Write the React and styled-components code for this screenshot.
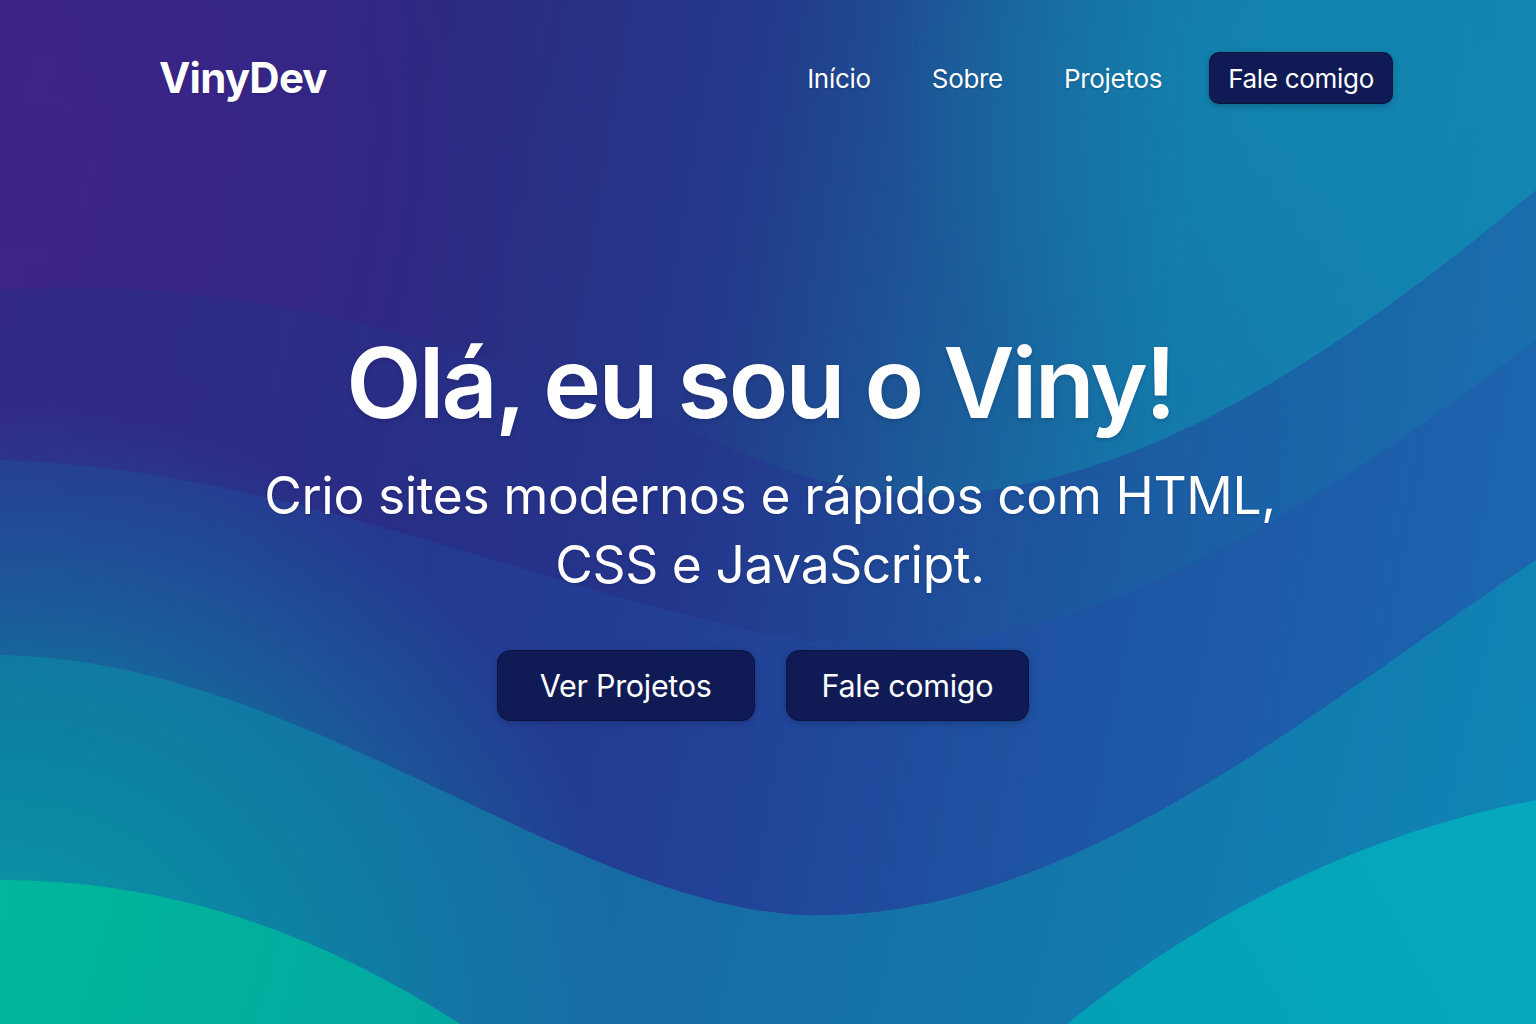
import React from "react";
import styled, { createGlobalStyle } from "styled-components";

const GlobalStyle = createGlobalStyle`
  html, body { margin: 0; padding: 0; }
  body {
    font-family: Inter, "Noto Sans", "Liberation Sans", sans-serif;
    color: #fff;
    background: #25308a;
  }
  * { box-sizing: border-box; }
`;

const Page = styled.div`
  position: relative;
  width: 100%;
  height: 1024px;
  overflow: hidden;
  background: #25308a;
`;

const Backdrop = styled.svg`
  position: absolute;
  inset: 0;
  width: 100%;
  height: 100%;
  z-index: 0;
`;

const Content = styled.div`
  position: relative;
  z-index: 1;
  display: flex;
  flex-direction: column;
  height: 100%;
`;

const Header = styled.header`
  display: flex;
  align-items: center;
  justify-content: space-between;
  padding: 52px 143px 0 159px;
`;

const Logo = styled.a`
  font-size: 42px;
  font-weight: 700;
  letter-spacing: -0.8px;
  color: #fff;
  text-decoration: none;
  line-height: 1;
  text-shadow: 0 1px 2px rgba(10, 10, 50, 0.25);
`;

const NavGroup = styled.nav`
  display: flex;
  align-items: center;
  gap: 47px;
`;

const NavList = styled.ul`
  display: flex;
  align-items: center;
  gap: 61px;
  list-style: none;
  margin: 0;
  padding: 0;
`;

const NavLink = styled.a`
  font-size: 26px;
  font-weight: 400;
  color: #fff;
  text-decoration: none;
  letter-spacing: -0.3px;
  text-shadow: 0 1px 2px rgba(10, 10, 50, 0.25);
`;

const Button = styled.a`
  display: inline-flex;
  align-items: center;
  justify-content: center;
  background: #101b55;
  color: #fff;
  text-decoration: none;
  border: 1px solid rgba(8, 12, 45, 0.55);
  box-shadow: 0 2px 6px rgba(5, 10, 40, 0.25);
  font-weight: 400;
  letter-spacing: -0.3px;
  height: ${(p) => (p.$size === "lg" ? "71px" : "52px")};
  padding: ${(p) => (p.$size === "lg" ? `0 ${p.$pad || 42}px` : "0 18px")};
  border-radius: ${(p) => (p.$size === "lg" ? "14px" : "10px")};
  font-size: ${(p) => (p.$size === "lg" ? "30.5px" : "26px")};
`;

const Hero = styled.section`
  display: flex;
  flex-direction: column;
  align-items: center;
  text-align: center;
  padding-top: 230px;
`;

const Title = styled.h1`
  margin: 0;
  font-size: 98px;
  font-weight: 600;
  line-height: 1;
  letter-spacing: -2.8px;
  transform: translateX(-8px);
  text-shadow: 0 2px 4px rgba(10, 10, 50, 0.2);
`;

const Subtitle = styled.p`
  margin: 29px 0 0;
  max-width: 1040px;
  font-size: 51.5px;
  font-weight: 400;
  line-height: 69px;
  letter-spacing: -0.4px;
  transform: translateX(2px);
  text-shadow: 0 1px 3px rgba(10, 10, 50, 0.2);
`;

const Actions = styled.div`
  display: flex;
  gap: 31px;
  margin: 51px 10px 0 0;
`;

function Background() {
  return (
    <Backdrop viewBox="0 0 1536 1024" preserveAspectRatio="none" aria-hidden="true">
      <defs>
        <linearGradient id="base" x1="0" y1="0" x2="1536" y2="250" gradientUnits="userSpaceOnUse">
          <stop offset="0" stopColor="#3b2488" />
          <stop offset="0.28" stopColor="#2b2a80" />
          <stop offset="0.48" stopColor="#243889" />
          <stop offset="0.62" stopColor="#1c5897" />
          <stop offset="0.78" stopColor="#1479aa" />
          <stop offset="1" stopColor="#1385b2" />
        </linearGradient>
        <radialGradient id="purpleGlow" cx="40" cy="180" r="520" gradientUnits="userSpaceOnUse">
          <stop offset="0" stopColor="#3d2389" stopOpacity="0.85" />
          <stop offset="1" stopColor="#3d2389" stopOpacity="0" />
        </radialGradient>
        <radialGradient id="tealGlow" cx="1300" cy="60" r="420" gradientUnits="userSpaceOnUse">
          <stop offset="0" stopColor="#1188b0" stopOpacity="0.7" />
          <stop offset="1" stopColor="#1188b0" stopOpacity="0" />
        </radialGradient>
        <linearGradient id="midBand" x1="0" y1="300" x2="1536" y2="600" gradientUnits="userSpaceOnUse">
          <stop offset="0" stopColor="#2b2c86" />
          <stop offset="0.45" stopColor="#24338c" />
          <stop offset="0.8" stopColor="#1f4ea2" />
          <stop offset="1" stopColor="#1d62ae" />
        </linearGradient>
        <linearGradient id="lowBand" x1="0" y1="460" x2="1536" y2="760" gradientUnits="userSpaceOnUse">
          <stop offset="0" stopColor="#233f98" />
          <stop offset="0.5" stopColor="#21469e" />
          <stop offset="1" stopColor="#1e5eb0" />
        </linearGradient>
        <linearGradient id="waveB" x1="0" y1="650" x2="1536" y2="1024" gradientUnits="userSpaceOnUse">
          <stop offset="0" stopColor="#1a629f" />
          <stop offset="0.45" stopColor="#176ca5" />
          <stop offset="1" stopColor="#0f86b5" />
        </linearGradient>
        <radialGradient id="tealLow" cx="0" cy="1024" r="620" gradientUnits="userSpaceOnUse">
          <stop offset="0" stopColor="#02a6a2" stopOpacity="0.9" />
          <stop offset="0.6" stopColor="#0692a5" stopOpacity="0.5" />
          <stop offset="1" stopColor="#0a8aa6" stopOpacity="0" />
        </radialGradient>
        <linearGradient id="waveA" x1="0" y1="880" x2="500" y2="1024" gradientUnits="userSpaceOnUse">
          <stop offset="0" stopColor="#00b69c" />
          <stop offset="1" stopColor="#02a7a0" />
        </linearGradient>
        <linearGradient id="waveC" x1="1100" y1="1024" x2="1536" y2="780" gradientUnits="userSpaceOnUse">
          <stop offset="0" stopColor="#04a0b8" />
          <stop offset="1" stopColor="#05aabe" />
        </linearGradient>
      </defs>
      <rect x="0" y="0" width="1536" height="1024" fill="url(#base)" />
      <rect x="0" y="0" width="1536" height="1024" fill="url(#purpleGlow)" />
      <rect x="0" y="0" width="1536" height="1024" fill="url(#tealGlow)" />
      <path
        d="M0,290 C260,270 520,360 760,460 C1000,560 1250,430 1536,190 L1536,1024 L0,1024 Z"
        fill="url(#midBand)"
        opacity="0.6"
      />
      <path
        d="M0,460 C300,470 560,600 800,640 C1050,680 1300,520 1536,340 L1536,1024 L0,1024 Z"
        fill="url(#lowBand)"
        opacity="0.55"
      />
      <path
        d="M0,655 C300,660 560,900 800,915 C1060,925 1300,720 1536,560 L1536,1024 L0,1024 Z"
        fill="url(#waveB)"
      />
      <rect x="0" y="400" width="1536" height="624" fill="url(#tealLow)" />
      <path
        d="M0,880 C180,880 330,940 460,1024 L0,1024 Z"
        fill="url(#waveA)"
      />
      <path
        d="M1067,1024 C1220,900 1380,830 1536,800 L1536,1024 Z"
        fill="url(#waveC)"
      />
    </Backdrop>
  );
}

export default function App() {
  return (
    <>
      <GlobalStyle />
      <Page>
        <Background />
        <Content>
          <Header>
            <Logo href="#">VinyDev</Logo>
            <NavGroup>
              <NavList>
                <li><NavLink href="#">Início</NavLink></li>
                <li><NavLink href="#">Sobre</NavLink></li>
                <li><NavLink href="#">Projetos</NavLink></li>
              </NavList>
              <Button href="#">Fale comigo</Button>
            </NavGroup>
          </Header>
          <Hero>
            <Title>Olá, eu sou o Viny!</Title>
            <Subtitle>Crio sites modernos e rápidos com HTML, CSS e JavaScript.</Subtitle>
            <Actions>
              <Button $size="lg" $pad={42} href="#">Ver Projetos</Button>
              <Button $size="lg" $pad={35} href="#">Fale comigo</Button>
            </Actions>
          </Hero>
        </Content>
      </Page>
    </>
  );
}
